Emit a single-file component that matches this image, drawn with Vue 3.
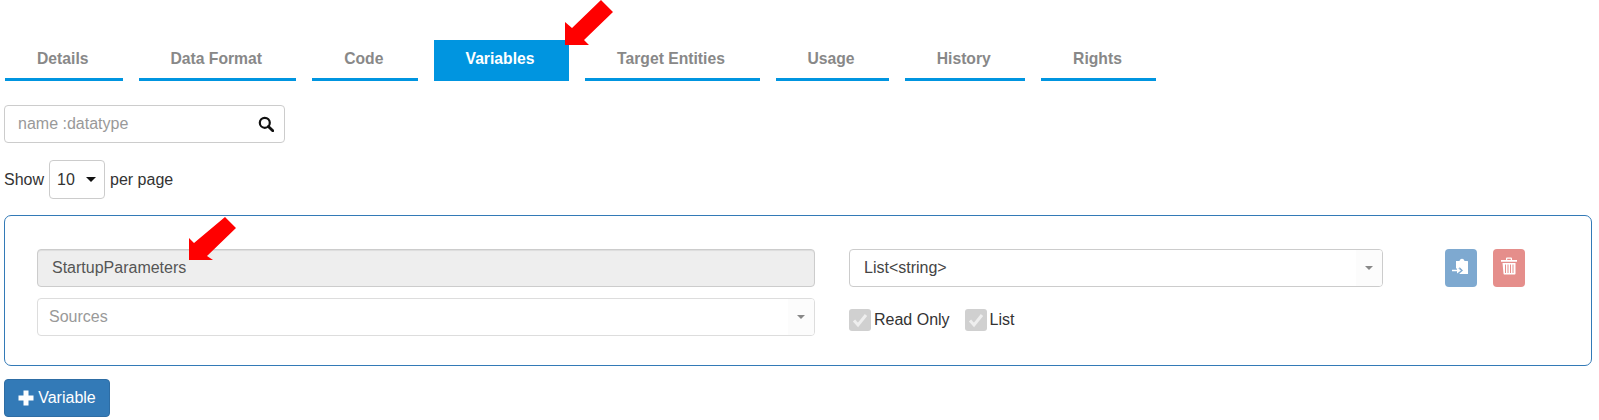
<script setup>
const tabs = [
  { label: 'Details', width: 117.5 },
  { label: 'Data Format', width: 157.5 },
  { label: 'Code', width: 105.5 },
  { label: 'Variables', width: 135, active: true },
  { label: 'Target Entities', width: 175 },
  { label: 'Usage', width: 113 },
  { label: 'History', width: 120.5 },
  { label: 'Rights', width: 115 }
]
</script>

<template>
  <div class="page">
    <nav class="tabs">
      <a
        v-for="tab in tabs"
        :key="tab.label"
        class="tab"
        :class="{ active: tab.active }"
        :style="{ width: tab.width + 'px' }"
      >{{ tab.label }}</a>
    </nav>

    <div class="search">
      <span class="placeholder">name :datatype</span>
      <svg class="search-icon" viewBox="0 0 16 16" width="16" height="16">
        <circle cx="6.8" cy="6.8" r="5" fill="none" stroke="#111" stroke-width="2.2" />
        <path d="M10.4 10.4 L14.8 14.8" stroke="#111" stroke-width="2.8" stroke-linecap="round" />
      </svg>
    </div>

    <div class="pager">
      <span>Show</span>
      <div class="page-size"><span>10</span><i class="caret black"></i></div>
      <span>per page</span>
    </div>

    <section class="panel">
      <div class="field readonly">StartupParameters</div>
      <div class="field picker value">
        <span>List&lt;string&gt;</span>
        <span class="picker-end"><i class="caret small"></i></span>
      </div>
      <div class="actions">
        <button class="icon-btn blue" aria-label="Copy">
          <svg viewBox="0 0 18 18" width="18" height="18">
            <path fill="#fff" d="M4 4H7.500C7.700 2.700 8.500 1.700 10 1.700S12.300 2.700 12.500 4H15.500C15.800 4 16 4.200 16 4.500V17H7.500V16.500L11 13.500 7.500 10V11.500H4z" />
            <path fill="#fff" d="M0 12.800H5V10.500L9 13.500 5 16.500V14.200H0z" />
          </svg>
        </button>
        <button class="icon-btn red" aria-label="Delete">
          <svg viewBox="0 0 18 18" width="18" height="18">
            <path fill="#fff" d="M1 3h5V1.500C6 1 6.400.6 6.900.6h4.200c.5 0 .9.400.9.900V3h5v1.800H1zM7.200 1.700V3h3.600V1.700z" />
            <path fill="#fff" d="M2.500 6h13v10.500c0 .6-.4 1-1 1h-10c-.6 0-1-.4-1-1z" />
            <path stroke="#e58e8b" stroke-width="1" d="M5.500 7.500v8.500M8 7.500v8.500M10.500 7.500v8.500M13 7.500v8.500" />
          </svg>
        </button>
      </div>
      <div class="field picker muted">
        <span class="sources">Sources</span>
        <span class="picker-end"><i class="caret small"></i></span>
      </div>
      <div class="checks">
        <label class="check"><span class="box"><svg viewBox="0 0 22 22" width="22" height="22"><path d="M5 11.500l4 4.500 8-10" fill="none" stroke="#eee" stroke-width="3" /></svg></span>Read Only</label>
        <label class="check"><span class="box"><svg viewBox="0 0 22 22" width="22" height="22"><path d="M5 11.500l4 4.500 8-10" fill="none" stroke="#eee" stroke-width="3" /></svg></span>List</label>
      </div>
    </section>

    <button class="add">
      <svg viewBox="0 0 16 16" width="16" height="16"><path fill="#fff" d="M5.500.5h5v5h5v5h-5v5h-5v-5h-5v-5h5z" /></svg>
      <span>Variable</span>
    </button>

    <svg class="arrow arrow-tab" viewBox="0 0 48 45" width="48" height="45">
      <path fill="#f00" d="M0 22 L7 28 L36 0 L48 12 L19 40 L24 45 L0 45 Z" />
    </svg>
    <svg class="arrow arrow-field" viewBox="0 0 47 43" width="47" height="43">
      <path fill="#f00" d="M0 21 L5 26 L36 0 L47 11 L18 39 L24 43 L0 43 Z" />
    </svg>
  </div>
</template>

<style>
html, body { margin: 0; background: #fff; }
</style>

<style scoped>
.page {
  position: relative;
  width: 1599px;
  height: 420px;
  overflow: hidden;
  font-family: "Liberation Sans", Arial, sans-serif;
  font-size: 16px;
  color: #333;
  box-sizing: border-box;
  padding: 40px 0 0 4px;
}
.tabs {
  display: flex;
  gap: 16px;
  height: 41px;
  padding-left: 1px;
}
.tab {
  box-sizing: border-box;
  height: 41px;
  line-height: 38px;
  padding-right: 2px;
  text-align: center;
  font-size: 15.700px;
  font-weight: 700;
  color: #888;
  border-bottom: 3px solid #0095e0;
}
.tab.active { background: #0095e0; color: #fff; }
.search {
  box-sizing: border-box;
  width: 281px;
  height: 38px;
  margin-top: 24px;
  border: 1px solid #ccc;
  border-radius: 4px;
  display: flex;
  align-items: center;
  justify-content: space-between;
  padding: 0 10px 0 13px;
}
.placeholder { color: #999; font-size: 16px; }
.search-icon { display: block; }
.pager {
  display: flex;
  align-items: center;
  gap: 5px;
  height: 39px;
  margin-top: 17px;
}
.page-size {
  box-sizing: border-box;
  width: 56px;
  height: 39px;
  border: 1px solid #ccc;
  border-radius: 4px;
  display: flex;
  align-items: center;
  justify-content: space-between;
  padding: 0 8px 0 7px;
}
.caret {
  display: block;
  width: 0;
  height: 0;
  border-left: 5px solid transparent;
  border-right: 5px solid transparent;
  border-top: 5px solid #888;
}
.caret.black { border-top-color: #111; }
.caret.small {
  border-left-width: 4px;
  border-right-width: 4px;
  border-top-width: 4px;
}
.panel {
  box-sizing: border-box;
  width: 1588px;
  height: 151px;
  margin-top: 16px;
  padding: 33px 0 0 32px;
  border: 1px solid #337ab7;
  border-radius: 7px;
  display: grid;
  grid-template-columns: 778px 534px 142px;
  grid-template-rows: 38px 38px;
  column-gap: 34px;
  row-gap: 11px;
}
.field {
  box-sizing: border-box;
  height: 38px;
  border: 1px solid #ccc;
  border-radius: 4px;
  line-height: 36px;
}
.readonly {
  background: #eee;
  color: #555;
  padding-left: 14px;
  box-shadow: inset 0 1px 1px rgba(0, 0, 0, .075);
}
.picker {
  display: flex;
  justify-content: space-between;
  padding-left: 14px;
  overflow: hidden;
}
.muted { border-color: #ddd; padding-left: 11px; }
.value { color: #444; }
.sources { color: #999; }
.picker-end {
  width: 26px;
  height: 36px;
  background: #fcfcfc;
  display: flex;
  align-items: center;
  justify-content: center;
}
.actions {
  display: flex;
  gap: 16px;
  padding-left: 28px;
}
.icon-btn {
  width: 32px;
  height: 38px;
  padding: 0 0 4px;
  border: none;
  border-radius: 4px;
  display: flex;
  flex: none;
  align-items: center;
  justify-content: center;
}
.blue { background: #7ea9d0; }
.red { background: #e58e8b; }
.checks {
  display: flex;
  align-items: center;
  gap: 15px;
  padding-top: 6px;
}
.check {
  display: flex;
  align-items: center;
  gap: 3px;
}
.box {
  width: 22px;
  height: 22px;
  border-radius: 3px;
  background: #d0d0d0;
  display: block;
}
.box svg { display: block; }
.add {
  box-sizing: border-box;
  width: 106px;
  height: 38px;
  margin-top: 13px;
  padding: 0;
  background: #337ab7;
  border: 1px solid #2e6da4;
  border-radius: 4px;
  color: #fff;
  font: inherit;
  display: flex;
  align-items: center;
  justify-content: center;
  gap: 4px;
}
.arrow { position: absolute; display: block; }
.arrow-tab { left: 565px; top: 0; }
.arrow-field { left: 189px; top: 217px; }
</style>
